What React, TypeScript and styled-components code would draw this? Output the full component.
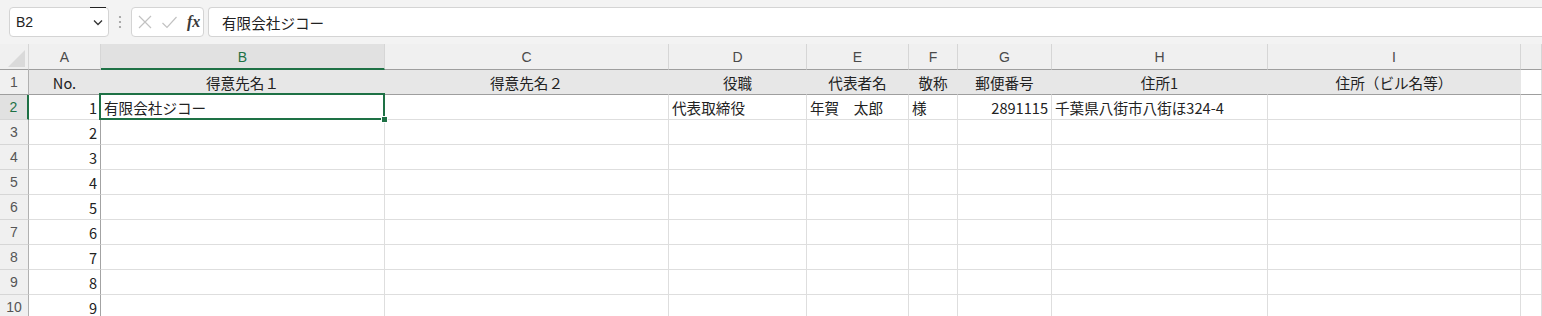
import React from 'react';
import styled, { createGlobalStyle } from 'styled-components';

const GlobalStyle = createGlobalStyle`
  body {
    margin: 0;
    background: #ffffff;
    font-family: "Noto Sans CJK JP", "Liberation Sans", sans-serif;
    overflow: hidden;
  }
`;

const GREEN = '#1e7145';
const COLS = [29, 72, 284, 284, 138, 102, 49, 94, 216, 253];

const Page = styled.div`
  width: 1542px;
  height: 316px;
  overflow: hidden;
  background: #fff;
`;

const TopBar = styled.div`
  display: flex;
  align-items: flex-start;
  height: 44px;
  padding: 7px 0 0 9px;
  box-sizing: border-box;
  background: #f3f3f3;
`;

const NameBox = styled.div`
  display: flex;
  align-items: stretch;
  width: 100px;
  height: 30px;
  box-sizing: border-box;
  background: #fff;
  border: 1px solid #d4d4d4;
  border-radius: 4px;
`;

const NameText = styled.div`
  flex: 1;
  display: flex;
  align-items: center;
  padding-left: 6px;
  font-family: "Liberation Sans", "Noto Sans", sans-serif;
  font-size: 14px;
  color: #222;
`;

const DropButton = styled.div`
  width: 16px;
  margin: -1px 2px 0 0;
  border-top: 1px solid #222;
  display: flex;
  align-items: center;
  justify-content: center;
`;

const Grip = styled.div`
  width: 22px;
  height: 30px;
  display: flex;
  align-items: center;
  justify-content: center;
`;

const ActionBox = styled.div`
  display: flex;
  align-items: center;
  width: 73px;
  height: 30px;
  box-sizing: border-box;
  padding-left: 5px;
  gap: 8px;
  background: #fff;
  border: 1px solid #d4d4d4;
  border-radius: 4px;
`;

const Fx = styled.span`
  font-family: "Liberation Serif", serif;
  font-style: italic;
  font-weight: bold;
  font-size: 16px;
  color: #3a3a3a;
  margin-left: 1px;
`;

const FormulaInput = styled.div`
  flex: 1;
  margin-left: 4px;
  height: 30px;
  box-sizing: border-box;
  display: flex;
  align-items: center;
  padding-left: 13px;
  background: #fff;
  border: 1px solid #d4d4d4;
  border-right: none;
  border-radius: 4px 0 0 4px;
  font-size: 14.6px;
  color: #222;
`;

const Sheet = styled.div`
  display: grid;
  grid-template-columns: ${COLS.map((w) => `${w}px`).join(' ')} 1fr;
  grid-auto-rows: 25px;
  grid-template-rows: 26px;
`;

const Corner = styled.div`
  background: #f0f0f0;
  border-right: 1px solid #d6d6d6;
  border-bottom: 1px solid #9e9e9e;
  box-sizing: border-box;
  display: flex;
  align-items: flex-end;
  justify-content: flex-end;
  padding: 0 3px 2px 0;
`;

const ColHead = styled.div<{ $sel?: boolean }>`
  box-sizing: border-box;
  display: flex;
  align-items: center;
  justify-content: center;
  background: ${(p) => (p.$sel ? '#e1e1e1' : '#f0f0f0')};
  color: ${(p) => (p.$sel ? GREEN : '#4a4a4a')};
  border-right: 1px solid #d6d6d6;
  border-bottom: ${(p) => (p.$sel ? `2px solid ${GREEN}` : '1px solid #9e9e9e')};
  font-family: "Liberation Sans", "Noto Sans", sans-serif;
  font-size: 14px;
  padding-top: 1px;
`;

const RowHead = styled.div<{ $sel?: boolean; $title?: boolean }>`
  box-sizing: border-box;
  display: flex;
  align-items: center;
  justify-content: center;
  background: ${(p) => (p.$sel ? '#e1e1e1' : '#f0f0f0')};
  color: ${(p) => (p.$sel ? GREEN : '#555')};
  border-right: ${(p) => (p.$sel ? `2px solid ${GREEN}` : '1px solid #b0b0b0')};
  border-bottom: 1px solid ${(p) => (p.$title ? '#9e9e9e' : '#d6d6d6')};
  font-family: "Liberation Sans", "Noto Sans", sans-serif;
  font-size: 14px;
`;

const Cell = styled.div<{
  $align?: 'left' | 'center' | 'right';
  $title?: boolean;
  $fill?: boolean;
  $edge?: boolean;
  $active?: boolean;
}>`
  position: relative;
  box-sizing: border-box;
  display: flex;
  align-items: center;
  justify-content: ${(p) =>
    p.$align === 'center' ? 'center' : p.$align === 'right' ? 'flex-end' : 'flex-start'};
  padding: 0 3px;
  white-space: nowrap;
  font-size: 14.6px;
  color: #222;
  background: ${(p) => (p.$fill ? '#e7e7e7' : '#fff')};
  border-right: 1px solid
    ${(p) => (p.$edge ? '#a3a3a3' : p.$fill ? '#e7e7e7' : '#dedede')};
  border-bottom: 1px solid ${(p) => (p.$title ? '#9e9e9e' : '#dedede')};

  ${(p) =>
    p.$active &&
    `
    &::after {
      content: '';
      position: absolute;
      top: -2px;
      left: -2px;
      right: -1px;
      bottom: -1px;
      border: 2px solid ${GREEN};
      z-index: 2;
      pointer-events: none;
    }
    &::before {
      content: '';
      position: absolute;
      right: -4px;
      bottom: -4px;
      width: 5px;
      height: 5px;
      background: ${GREEN};
      border: 1px solid #fff;
      z-index: 3;
    }
  `}
`;

const letters = ['A', 'B', 'C', 'D', 'E', 'F', 'G', 'H', 'I'];
const titles = ['No.', '得意先名１', '得意先名２', '役職', '代表者名', '敬称', '郵便番号', '住所1', '住所（ビル名等）'];
const firstRow = ['1', '有限会社ジコー', '', '代表取締役', '年賀　太郎', '様', '2891115', '千葉県八街市八街ほ324-4', ''];
const aligns: Array<'left' | 'right'> = ['right', 'left', 'left', 'left', 'left', 'left', 'right', 'left', 'left'];

const App: React.FC = () => {
  const rows: React.ReactNode[] = [];

  // 行1: 見出し
  rows.push(<RowHead key="h1" $title>1</RowHead>);
  titles.forEach((t, i) => (
    rows.push(
      <Cell key={`t${i}`} $align="center" $title $fill>
        {t}
      </Cell>
    )
  ));
  rows.push(<Cell key="t-j" $title />);

  // 行2..10
  for (let r = 2; r <= 10; r++) {
    rows.push(
      <RowHead key={`h${r}`} $sel={r === 2}>
        {r}
      </RowHead>
    );
    for (let c = 0; c < 9; c++) {
      const text = r === 2 ? firstRow[c] : c === 0 ? String(r - 1) : '';
      rows.push(
        <Cell key={`c${r}-${c}`} $align={aligns[c]} $edge={c === 0} $active={r === 2 && c === 1}>
          {text}
        </Cell>
      );
    }
    rows.push(<Cell key={`c${r}-j`} />);
  }

  return (
    <Page>
      <GlobalStyle />
      <TopBar>
        <NameBox>
          <NameText>B2</NameText>
          <DropButton>
            <svg width="12" height="12" viewBox="0 0 12 12">
              <path d="M2 4.5 L6 8.5 L10 4.5" fill="none" stroke="#333" strokeWidth="1.3" />
            </svg>
          </DropButton>
        </NameBox>
        <Grip>
          <svg width="4" height="14" viewBox="0 0 4 14">
            <circle cx="2" cy="2" r="1.1" fill="#999" />
            <circle cx="2" cy="7" r="1.1" fill="#999" />
            <circle cx="2" cy="12" r="1.1" fill="#999" />
          </svg>
        </Grip>
        <ActionBox>
          <svg width="16" height="16" viewBox="0 0 16 16">
            <path d="M2 2 L14 14 M14 2 L2 14" stroke="#c2c2c2" strokeWidth="1.2" fill="none" />
          </svg>
          <svg width="17" height="16" viewBox="0 0 17 16">
            <path d="M1.5 9 L6 13.5 L15.5 3" stroke="#c2c2c2" strokeWidth="1.2" fill="none" />
          </svg>
          <Fx>fx</Fx>
        </ActionBox>
        <FormulaInput>有限会社ジコー</FormulaInput>
      </TopBar>
      <Sheet>
        <Corner>
          <svg width="17" height="17" viewBox="0 0 17 17">
            <path d="M17 0 L17 17 L0 17 Z" fill="#dadada" />
          </svg>
        </Corner>
        {letters.map((l, i) => (
          <ColHead key={l} $sel={i === 1}>
            {l}
          </ColHead>
        ))}
        <ColHead />
        {rows}
      </Sheet>
    </Page>
  );
};

export default App;
